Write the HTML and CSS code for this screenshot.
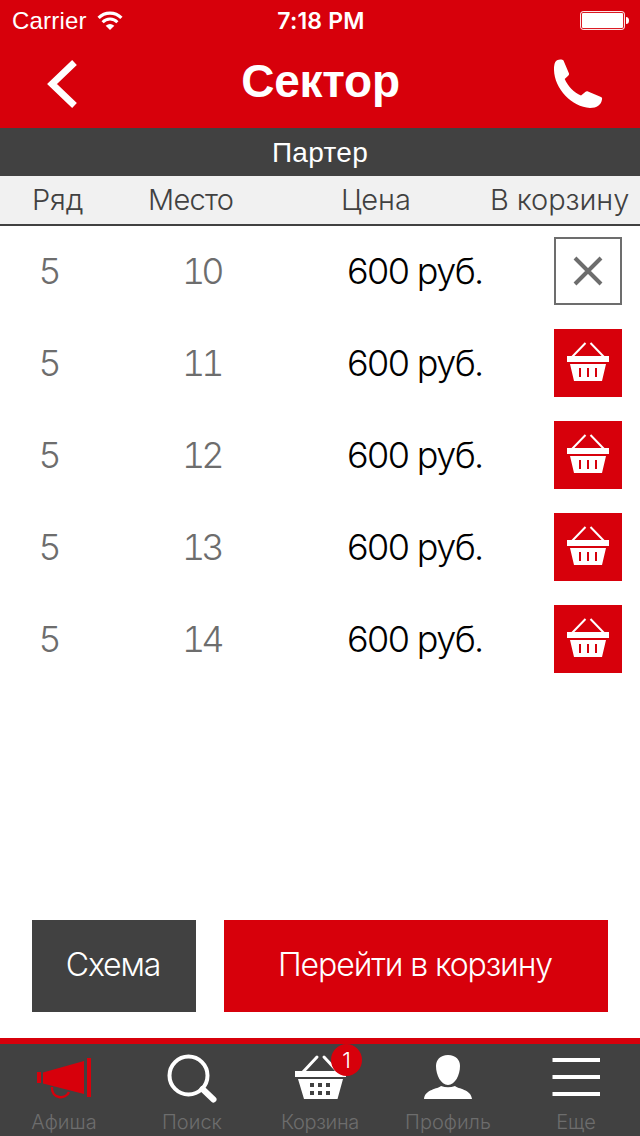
FILE: index.html
```
<!DOCTYPE html>
<html lang="ru">
<head>
<meta charset="utf-8">
<title>Сектор</title>
<link rel="stylesheet" href="styles.css">
</head>
<body>
<svg class="defs" width="0" height="0" aria-hidden="true">
  <symbol id="basket" viewBox="0 0 68 68">
    <path d="M17.500 28.500 31.500 14M50.500 28.500 36.500 14" fill="none" stroke="#fff" stroke-width="2"/>
    <path d="M13 27h42v6H13zM16 35h36l-4 17H20z" fill="#fff"/>
    <path d="M25 39h2v9h-2zM33 39h2v9h-2zM41 39h2v9h-2z" fill="#d7000b"/>
  </symbol>
</svg>
<div class="app">
  <header class="top">
    <div class="status">
      <div class="status-left">
        <span class="carrier">Carrier</span>
        <svg class="wifi" width="26" height="18" viewBox="0 0 26 18">
          <path d="M1.600 5.900a16 16 0 0 1 22.800 0" fill="none" stroke="#fff" stroke-width="3.200"/>
          <path d="M5.600 10.200a10.400 10.400 0 0 1 14.800 0" fill="none" stroke="#fff" stroke-width="3"/>
          <path d="M8.700 13.700q4.300-3.300 8.600 0L13 18z" fill="#fff"/>
        </svg>
      </div>
      <span class="time">7:18 PM</span>
      <svg class="battery" width="50" height="20" viewBox="0 0 50 20">
        <rect x=".6" y=".6" width="43.800" height="17.800" rx="2.500" fill="none" stroke="#fff"/>
        <rect x="2" y="2" width="41" height="15" rx="1" fill="#fff"/>
        <path d="M46 6q3 0 3 3.500T46 13z" fill="#fff"/>
      </svg>
    </div>
    <div class="nav">
      <svg class="back" width="50" height="50" viewBox="0 0 50 50">
        <path d="M28.500 3.500 6 25 28.500 46.500" fill="none" stroke="#fff" stroke-width="6.800"/>
      </svg>
      <h1 class="title">Сектор</h1>
      <svg class="phone" width="50" height="50" viewBox="0 0 50 50">
        <path d="M4 1.200C7 0 9.500.6 10.500 1.500L16 14.500c.3 1-.3 1.500-.8 2.200L11.700 20c3.300 7.500 9.300 13.700 16.300 16.400l4-3.200c1-.9 2-1 3-.7L48 38c1.200.6 1.200 1.300 1 2.500-1 5.500-5 8.500-12 8.500C19 48 1.500 30 1 11 1 6.500 1.500 2.800 4 1.200z" fill="#fff"/>
      </svg>
    </div>
  </header>
  <div class="sector">Партер</div>
  <div class="columns grid">
    <span>Ряд</span><span class="place-head">Место</span><span>Цена</span><span>В корзину</span>
  </div>
  <main class="seats">
    <div class="seat grid"><span>5</span><span class="place">10</span><span class="price">600 руб.</span>
      <button class="remove"><svg width="30" height="30" viewBox="0 0 30 30"><path d="m2 2 26 26M28 2 2 28" stroke="#6d6d6d" stroke-width="4"/></svg></button></div>
    <div class="seat grid"><span>5</span><span class="place">11</span><span class="price">600 руб.</span><button class="add"><svg width="68" height="68"><use href="#basket"/></svg></button></div>
    <div class="seat grid"><span>5</span><span class="place">12</span><span class="price">600 руб.</span><button class="add"><svg width="68" height="68"><use href="#basket"/></svg></button></div>
    <div class="seat grid"><span>5</span><span class="place">13</span><span class="price">600 руб.</span><button class="add"><svg width="68" height="68"><use href="#basket"/></svg></button></div>
    <div class="seat grid"><span>5</span><span class="place">14</span><span class="price">600 руб.</span><button class="add"><svg width="68" height="68"><use href="#basket"/></svg></button></div>
  </main>
  <div class="actions">
    <button class="action scheme"><span>Схема</span></button>
    <button class="action cart"><span>Перейти в корзину</span></button>
  </div>
  <nav class="tabs">
    <a class="tab">
      <svg width="60" height="56" viewBox="0 0 60 56"><path d="M3 28h4v11H3zM9 28.500 50 17v33L9 39.500zM53 14h4v39h-4z" fill="#d7000b"/><path d="M18 43c-1 12 14 13 17 5" fill="none" stroke="#d7000b" stroke-width="2.400"/></svg>
      <span>Афиша</span>
    </a>
    <a class="tab">
      <svg width="60" height="56" viewBox="0 0 60 56"><circle cx="26.500" cy="31.500" r="19" fill="none" stroke="#fff" stroke-width="4"/><path d="m40.500 45 11 10.500" stroke="#fff" stroke-width="6" stroke-linecap="round"/></svg>
      <span>Поиск</span>
    </a>
    <a class="tab">
      <svg width="60" height="56" viewBox="0 0 60 56"><path d="M13 28 27 13M48 28 34 13" fill="none" stroke="#fff" stroke-width="3" stroke-linecap="round"/><path d="M5 27h51v6H5zM8 35h45l-5.500 20H14z" fill="#fff"/><path d="M20 39h4v4h-4zM28 39h4v4h-4zM36 39h4v4h-4zM20 47h4v4h-4zM28 47h4v4h-4zM36 47h4v4h-4z" fill="#414141"/></svg>
      <span class="t-basket">Корзина</span>
      <b class="badge">1</b>
    </a>
    <a class="tab">
      <svg width="60" height="56" viewBox="0 0 60 56"><path d="M30 11c8 0 12 5 12 11 0 9-5 19-12 19S18 31 18 22c0-6 4-11 12-11zM23 42q7 2.500 14 0c3 3 16 3 17 13H6c1-10 14-10 17-13z" fill="#fff"/></svg>
      <span>Профиль</span>
    </a>
    <a class="tab">
      <svg width="60" height="56" viewBox="0 0 60 56"><path d="M6.500 14H54v4H6.500zM6.500 31H54v4H6.500zM6.500 48H54v4H6.500z" fill="#fff"/></svg>
      <span>Еще</span>
    </a>
  </nav>
</div>
</body>
</html>
```
FILE: styles.css
```
* { box-sizing: border-box; }
body { margin: 0; background: #fff; font-family: Inter, "Liberation Sans", sans-serif; font-weight: 300; }
button { border: 0; padding: 0; margin: 0; font: inherit; color: inherit; background: none; }
svg { display: block; flex: none; overflow: visible; }
.defs { position: absolute; }
.app { width: 640px; height: 1136px; display: flex; flex-direction: column; overflow: hidden; }
.top { height: 128px; flex: none; background: #d7000b; color: #fff; }
.status { height: 40px; display: grid; grid-template-columns: 1fr auto 1fr; align-items: center; padding: 1px 10px 0 12px; }
.status-left { display: flex; align-items: center; gap: 10px; }
.carrier { width: 75px; font: 400 24px/28px "Liberation Sans", sans-serif; letter-spacing: .2px; }
.time { font-size: 23px; font-weight: 600; letter-spacing: .2px; }
.battery { justify-self: end; }
.nav { height: 88px; display: flex; align-items: center; justify-content: space-between; padding: 0 37px 0 46px; }
.title { margin: 0; font: 700 46px/52px "Liberation Sans", sans-serif; letter-spacing: -.2px; padding: 0 8px 7px 0; }
.sector { height: 48px; flex: none; background: #414141; color: #fff; font: 400 28px/50px "Liberation Sans", sans-serif; letter-spacing: .3px; text-align: center; }
.grid { display: grid; align-items: center; white-space: nowrap; }
.columns { height: 50px; flex: none; grid-template-columns: 116px 193px 149px auto; padding: 0 0 2px 32px; background: #f1f1f1; border-bottom: 2px solid #414141; color: #414141; font-size: 29px; letter-spacing: -.1px; }
.place-head { letter-spacing: -.7px; }
.seats { flex: 1; padding-top: 11px; display: flex; flex-direction: column; gap: 24px; }
.seat { height: 68px; grid-template-columns: 143px 165px 207px 68px; padding-left: 39px; font-size: 36px; color: #6d6d6d; }
.place { font-variant-numeric: tabular-nums; letter-spacing: -4px; }
.price { color: #000; letter-spacing: -1.6px; }
.seat > span { padding-bottom: 1px; }
.remove, .add { width: 68px; height: 68px; display: flex; align-items: center; justify-content: center; }
.remove { border: 2px solid #6d6d6d; }
.add { background: #d7000b; }
.actions { display: flex; gap: 28px; padding: 0 32px 26px; }
.action { height: 92px; padding: 0 2px 3px 0; color: #fff; font-size: 32px; letter-spacing: -1.1px; white-space: nowrap; }
.scheme { width: 164px; background: #414141; }
.cart { flex: 1; background: #d7000b; }
.tabs { height: 98px; flex: none; display: grid; grid-template-columns: repeat(5, 128px); background: #414141; border-top: 6px solid #d7000b; }
.tab { position: relative; display: flex; flex-direction: column; align-items: center; color: #6d6d6d; font-size: 20px; line-height: 24px; }
.tab span { margin-top: 10px; }
.t-basket { letter-spacing: -.3px; }
.badge { position: absolute; left: 75px; top: 0; width: 31px; height: 32px; border-radius: 50%; background: #d7000b; color: #fff; font-size: 22px; line-height: 32px; font-weight: 300; text-align: center; }
```
